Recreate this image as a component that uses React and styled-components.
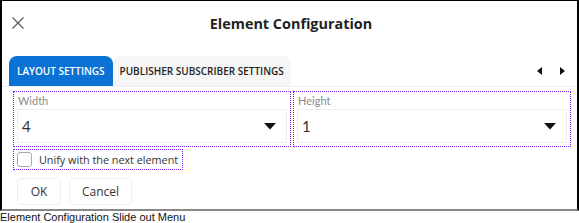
import React from "react";
import styled, { createGlobalStyle } from "styled-components";

const Global = createGlobalStyle`
  html, body { margin: 0; padding: 0; background: #fff; }
  body { width: 579px; height: 223px; overflow: hidden; font-family: "Open Sans", sans-serif; }
`;

const Figure = styled.div`
  width: 579px;
  display: flex;
  flex-direction: column;
`;

const Panel = styled.div`
  box-sizing: border-box;
  width: 579px;
  height: 211px;
  border-left: 2px solid #000;
  border-right: 2px solid #000;
  border-top: 1px solid #000;
  border-bottom: 2px solid #888;
  display: flex;
  flex-direction: column;
`;

const Header = styled.div`
  height: 44px;
  display: flex;
  align-items: center;
  position: relative;
  justify-content: center;
`;

const CloseBtn = styled.button`
  position: absolute;
  left: 9px;
  top: 15px;
  width: 14px;
  height: 14px;
  padding: 0;
  border: none;
  background: none;
  display: flex;
  align-items: center;
  justify-content: center;
`;

const Title = styled.div`
  font-family: "Open Sans", sans-serif;
  font-weight: 700;
  font-size: 14.4px;
  color: #222;
  margin-left: 3px;
`;

const TabBar = styled.div`
  margin-top: 11px;
  height: 30px;
  display: flex;
  align-items: stretch;
  padding-left: 7px;
  padding-right: 12px;
  border-bottom: 1px solid #f0f0f0;
`;

const Tab = styled.div`
  display: flex;
  align-items: center;
  padding: 0 ${(p) => (p.$active ? "8px" : "7px")};
  font-size: 10px;
  font-weight: 600;
  white-space: nowrap;
  border-radius: 8px 8px 0 0;
  background: ${(p) => (p.$active ? "#0a72d4" : "#f6f6f6")};
  color: ${(p) => (p.$active ? "#fff" : "#222")};
`;

const Spacer = styled.div`
  flex: 1;
`;

const Arrows = styled.div`
  display: flex;
  align-items: center;
  gap: 18px;
`;

const Content = styled.div`
  padding: 4px 5px 0 11px;
  display: flex;
  flex-direction: column;
`;

const FieldRow = styled.div`
  display: flex;
  gap: 2px;
`;

const Field = styled.div`
  box-sizing: border-box;
  width: 278px;
  height: 56px;
  border: 1px dotted #7d1ff0;
  padding: 2px 3px 3px 3px;
  display: flex;
  flex-direction: column;
`;

const Label = styled.div`
  font-family: Lato, sans-serif;
  font-size: 11px;
  color: #8a8a8a;
  height: 14px;
  line-height: 14px;
  padding-left: 1px;
  margin-bottom: 1px;
`;

const Select = styled.div`
  box-sizing: border-box;
  height: 34px;
  border: 1px solid #eeeeee;
  display: flex;
  align-items: center;
  justify-content: space-between;
  padding: 0 10px 0 4px;
  font-family: Lato, sans-serif;
  font-size: 15px;
  color: #333;
`;

const CheckRow = styled.label`
  box-sizing: border-box;
  margin-top: 2px;
  align-self: flex-start;
  height: 21px;
  border: 1px dotted #7d1ff0;
  display: flex;
  align-items: center;
  padding: 0 4px 0 3px;
  gap: 7px;
  font-size: 10.8px;
  white-space: nowrap;
  color: #333;
`;

const Box = styled.span`
  box-sizing: border-box;
  width: 15px;
  height: 15px;
  border: 1px solid #aaa;
  border-radius: 3px;
  background: #fff;
`;

const Buttons = styled.div`
  display: flex;
  gap: 8px;
  margin-top: 8px;
  padding-left: 4px;
`;

const Button = styled.button`
  box-sizing: border-box;
  height: 27px;
  width: ${(p) => p.$w}px;
  background: #fff;
  border: 1px solid #eeeeee;
  border-radius: 4px;
  font-family: "Open Sans", sans-serif;
  font-size: 12px;
  color: #333;
  padding: 0;
`;

const Caption = styled.div`
  font-family: "Liberation Sans", Arial, sans-serif;
  font-size: 11px;
  color: #111;
  line-height: 12px;
`;

const Caret = () => (
  <svg width="12" height="7" viewBox="0 0 12 7">
    <polygon points="0,0 12,0 6,6.5" fill="#111" />
  </svg>
);

export default function App() {
  return (
    <>
      <Global />
      <Figure>
        <Panel>
          <Header>
            <CloseBtn aria-label="close">
              <svg width="12" height="12" viewBox="0 0 12 12">
                <path d="M0.5 0.5 L11.5 11.5 M11.5 0.5 L0.5 11.5" stroke="#555" strokeWidth="1.1" />
              </svg>
            </CloseBtn>
            <Title>Element Configuration</Title>
          </Header>
          <TabBar>
            <Tab $active>LAYOUT SETTINGS</Tab>
            <Tab>PUBLISHER SUBSCRIBER SETTINGS</Tab>
            <Spacer />
            <Arrows>
              <svg width="5" height="8" viewBox="0 0 5 8">
                <polygon points="5,0 5,8 0,4" fill="#111" />
              </svg>
              <svg width="5" height="8" viewBox="0 0 5 8">
                <polygon points="0,0 0,8 5,4" fill="#111" />
              </svg>
            </Arrows>
          </TabBar>
          <Content>
            <FieldRow>
              <Field>
                <Label>Width</Label>
                <Select>
                  <span>4</span>
                  <Caret />
                </Select>
              </Field>
              <Field>
                <Label>Height</Label>
                <Select>
                  <span>1</span>
                  <Caret />
                </Select>
              </Field>
            </FieldRow>
            <CheckRow>
              <Box />
              Unify with the next element
            </CheckRow>
            <Buttons>
              <Button $w={44}>OK</Button>
              <Button $w={63}>Cancel</Button>
            </Buttons>
          </Content>
        </Panel>
        <Caption>Element Configuration Slide out Menu</Caption>
      </Figure>
    </>
  );
}
